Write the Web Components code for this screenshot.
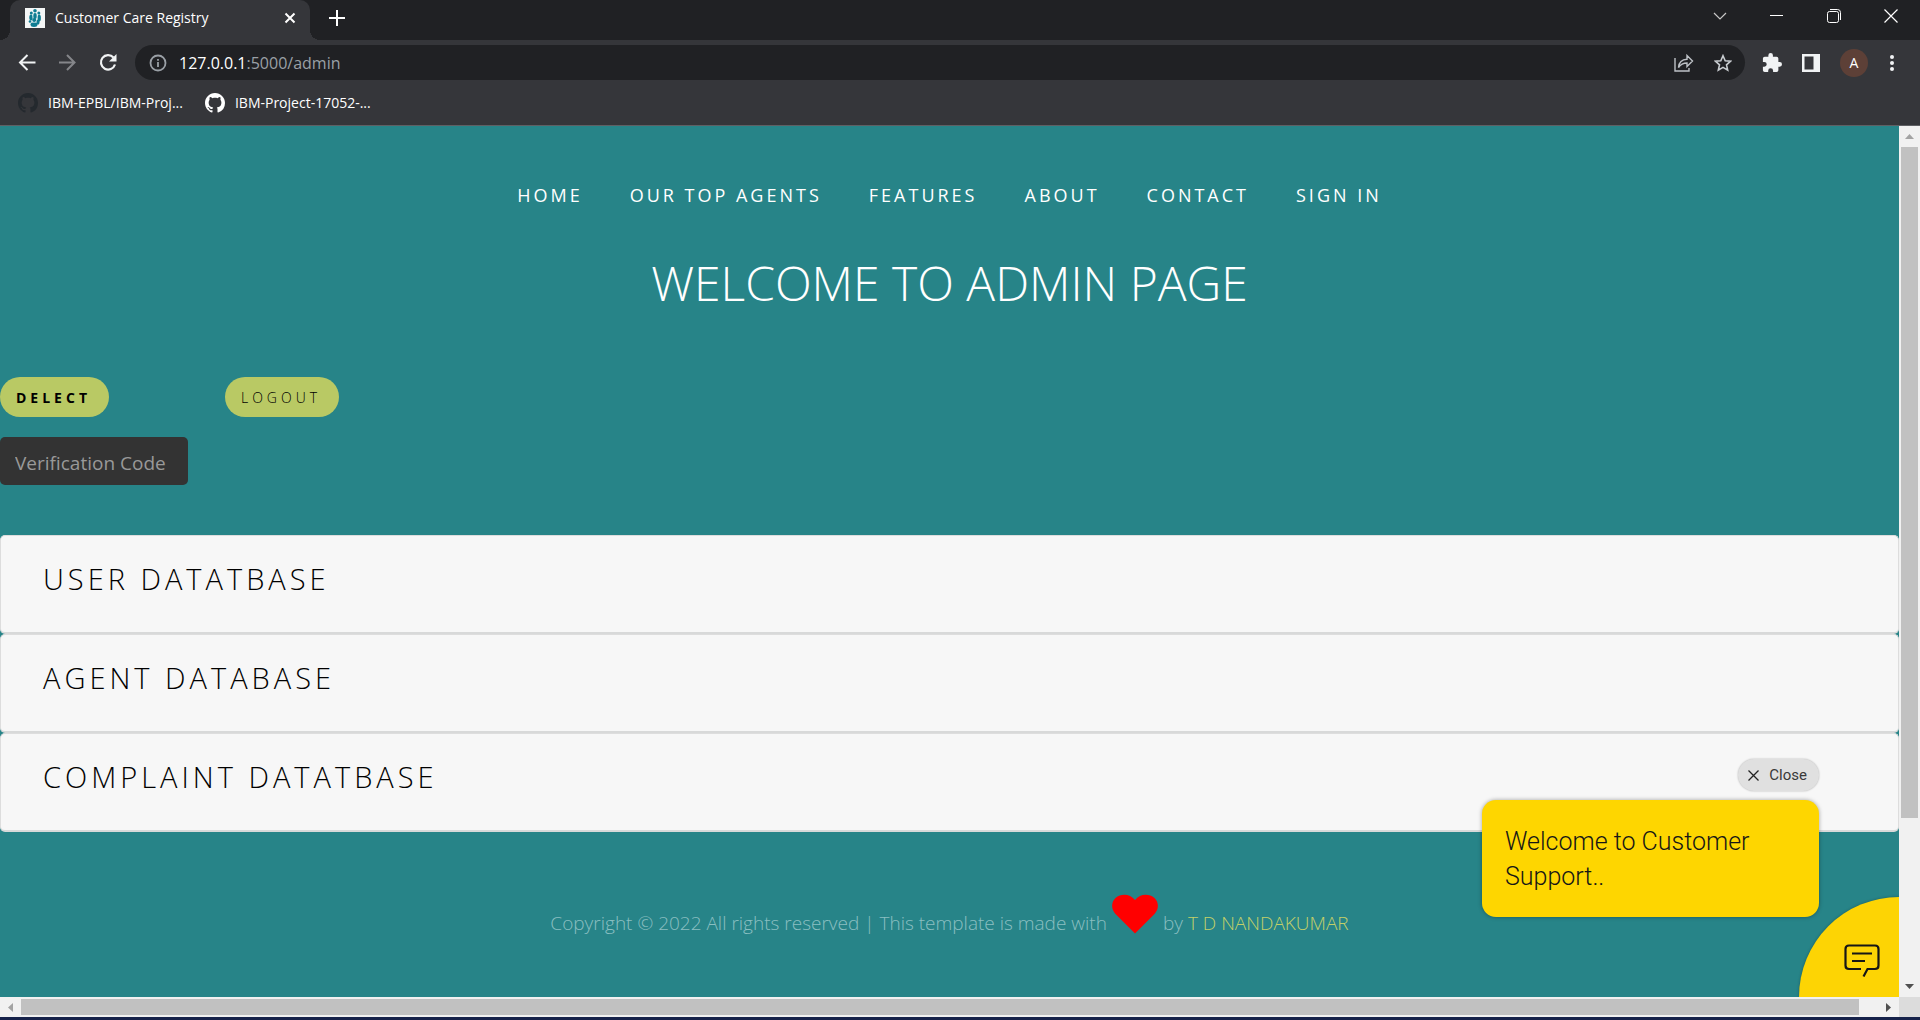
<!DOCTYPE html>
<html lang="en">
<head>
<meta charset="utf-8">
<title>Customer Care Registry</title>
<style>
html, body { margin: 0; height: 100%; overflow: hidden; }
body { font-family: "Open Sans", "Noto Sans", sans-serif; }
</style>
</head>
<body>
<browser-window>
  <tab-strip slot="chrome">Customer Care Registry</tab-strip>
  <tool-bar slot="chrome"></tool-bar>
  <bookmark-bar slot="chrome">
    <book-mark tone="dark">IBM-EPBL/IBM-Proj...</book-mark>
    <book-mark>IBM-Project-17052-...</book-mark>
  </bookmark-bar>
  <admin-page>
    <site-nav></site-nav>
    <admin-actions></admin-actions>
    <section-card>User Datatbase</section-card>
    <section-card>Agent Database</section-card>
    <section-card>Complaint Datatbase</section-card>
    <site-footer></site-footer>
    <chat-widget slot="overlay">Welcome to Customer Support..</chat-widget>
  </admin-page>
</browser-window>

<script>
function define(name, html) {
  const template = document.createElement('template');
  template.innerHTML = '<style>*{box-sizing:border-box}button{font:inherit;border:0;background:none;padding:0;color:inherit}svg{display:block}</style>' + html;
  customElements.define(name, class extends HTMLElement {
    constructor() {
      super();
      this.attachShadow({ mode: 'open' }).append(template.content.cloneNode(true));
    }
  });
}

define('browser-window', `
<style>
:host { display: flex; flex-direction: column; height: 100vh; background: #35363a; border-bottom: 3px solid #16224a; box-sizing: border-box; }
.view { flex: 1; min-height: 0; display: grid; grid-template-columns: 1fr 21px; grid-template-rows: 1fr 20px; border-top: 1px solid #5f6064; }
.corner { background: #dcdcdc; }
</style>
<slot name="chrome"></slot>
<div class="view">
  <slot></slot>
  <scroll-track></scroll-track>
  <scroll-track horizontal></scroll-track>
  <div class="corner"></div>
</div>`);

define('scroll-track', `
<style>
:host { display: flex; flex-direction: column; background: #f1f1f1; min-height: 0; }
.arrow { flex: none; width: 21px; height: 21px; display: grid; place-items: center; }
.rail { flex: 1; display: flex; padding: 0 2px; }
.thumb { background: #c1c1c1; width: 100%; height: 81%; }
:host([horizontal]) { flex-direction: row; }
:host([horizontal]) .arrow { height: 20px; }
:host([horizontal]) .rail { padding: 2px 0; }
:host([horizontal]) .thumb { height: 100%; width: 99%; }
:host([horizontal]) svg { transform: rotate(-90deg); }
</style>
<div class="arrow"><svg width="9" height="5"><path d="M0 5L4.500 0L9 5Z" fill="#a3a3a3"/></svg></div>
<div class="rail"><div class="thumb"></div></div>
<div class="arrow"><svg width="9" height="5"><path d="M0 0H9L4.500 5Z" fill="#505050"/></svg></div>`);

define('tab-strip', `
<style>
:host { display: flex; height: 40px; background: #202124; color: #fff; padding-left: 10px; align-items: stretch; font-size: 14px; }
.tab { position: relative; width: 300px; background: #35363a; border-radius: 10px 10px 0 0; display: flex; align-items: center; padding: 0 14px 4px 15px; gap: 10px; }
.tab::before, .tab::after { content: ""; position: absolute; bottom: 0; width: 10px; height: 10px; }
.tab::before { right: 100%; background: radial-gradient(circle at 0 0, #202124 10px, #35363a 10px); }
.tab::after { left: 100%; background: radial-gradient(circle at 100% 0, #202124 10px, #35363a 10px); }
.title { flex: 1; white-space: nowrap; padding-bottom: 2px; }
.new { margin-left: 19px; padding-bottom: 4px; }
.win { margin-left: auto; display: flex; padding: 0 1px 8px 0; }
.win button { width: 57px; display: grid; place-items: center; }
</style>
<div class="tab">
  <svg width="20" height="20" viewBox="0 0 20 20"><path fill="#f4f6f6" d="M0 0H20V20H0Z"/><g fill="#0e7c92"><circle cx="10" cy="2.800" r="1.800"/><circle cx="6.300" cy="5" r="1.500"/><circle cx="13.800" cy="5" r="1.500"/><ellipse cx="10" cy="8" rx="2" ry="3"/><ellipse cx="6" cy="9.500" rx="1.700" ry="3"/><ellipse cx="14.200" cy="10" rx="1.700" ry="3.500"/><circle cx="9.200" cy="12" r="2"/><ellipse cx="9" cy="16.500" rx="3.500" ry="2.500"/><ellipse cx="13" cy="14" rx="1.600" ry="2.800"/><circle cx="5" cy="13.500" r="1.300"/></g><path d="M8 6V10M12 6V12M6.800 14.200Q9 15 11.300 14.200" stroke="#d9eef0" stroke-width=".6" fill="none"/></svg>
  <span class="title"><slot></slot></span>
  <button aria-label="Close tab"><svg width="12" height="12"><path d="M1.500 1.500L10.500 10.500M10.500 1.500L1.500 10.500" stroke="#fff" stroke-width="2"/></svg></button>
</div>
<button class="new" aria-label="New tab"><svg width="16" height="16"><path d="M8 0V16M0 8H16" stroke="#fff" stroke-width="2"/></svg></button>
<div class="win">
  <button aria-label="Search tabs"><svg width="14" height="8"><path d="M1 1L7 7L13 1" fill="none" stroke="#c8c8c8" stroke-width="1.200"/></svg></button>
  <button aria-label="Minimize"><svg width="13" height="2"><path d="M0 .5H13" stroke="#fff"/></svg></button>
  <button aria-label="Restore"><svg width="14" height="14" fill="none" stroke="#fff"><rect x=".5" y="2.500" width="11" height="11" rx="2"/><path d="M3 .5H10.500Q13.500 .5 13.500 3.500V11"/></svg></button>
  <button aria-label="Close window"><svg width="14" height="14"><path d="M.5 .5L13.500 13.500M13.500 .5L.5 13.500" stroke="#fff" stroke-width="1.200"/></svg></button>
</div>`);

define('tool-bar', `
<style>
:host { display: flex; align-items: center; height: 45px; padding: 0 18px; gap: 20px; color: #fff; }
form { flex: 1; margin: 0 -3px; height: 35px; border-radius: 18px; background: #202124; display: flex; align-items: center; padding: 0 13px 0 14px; gap: 12px; }
.url { flex: 1; font-size: 16px; color: #9aa0a6; }
.url b { font-weight: 400; color: #fff; }
.share { margin-right: 8px; }
.avatar { width: 28px; height: 28px; border-radius: 50%; background: #5d4037; font-size: 14px; line-height: 28px; }
.more { width: 16px; display: grid; place-items: center; margin: 0 2px 0 -4px; }
</style>
<button aria-label="Back"><svg width="20" height="20" fill="none" stroke="#f1f3f4" stroke-width="2"><path d="M17.500 9.500H2.500M9.500 2L2 9.500L9.500 17"/></svg></button>
<button aria-label="Forward"><svg width="20" height="20" fill="none" stroke="#85868a" stroke-width="2"><path d="M1 9.500H16M9 2L16.500 9.500L9 17"/></svg></button>
<button aria-label="Reload"><svg width="20" height="20"><path d="M15.500 4.500A7.200 7.200 0 1 0 17 11.500" fill="none" stroke="#f1f3f4" stroke-width="2.200"/><path d="M18.500 1V8.500H11Z" fill="#f1f3f4"/></svg></button>
<form>
  <svg width="18" height="18" fill="none" stroke="#9aa0a6" stroke-width="1.800"><circle cx="9" cy="9" r="7.500"/><path d="M9 8V13M9 5V6.800"/></svg>
  <span class="url"><b>127.0.0.1</b>:5000/admin</span>
  <button class="share" type="button" aria-label="Share"><svg width="20" height="18" fill="none" stroke="#bdc1c6" stroke-width="1.400"><path d="M1 4V17H15V14"/><path d="M4.500 13.500C5 8 8.500 5.500 13 5.300V1.500L18.500 7L13 12.500V9C9 9 6.500 10.500 4.500 13.500Z"/></svg></button>
  <button type="button" aria-label="Bookmark"><svg width="18" height="18" viewBox="0 0 18 18"><path d="M9 1.700L11.200 6.700L16.600 7.200L12.500 10.800L13.700 16.200L9 13.400L4.300 16.200L5.500 10.800L1.400 7.200L6.800 6.700Z" fill="none" stroke="#c8ccd0" stroke-width="1.600"/></svg></button>
</form>
<button aria-label="Extensions"><svg width="20" height="20" viewBox="1 1 22 22"><path fill="#f1f3f4" d="M20.500 11H19V7a2 2 0 0 0-2-2h-4V3.500a2.500 2.500 0 0 0-5 0V5H4a2 2 0 0 0-2 2v3.800h1.500a2.700 2.700 0 0 1 0 5.400H2V20a2 2 0 0 0 2 2h3.800v-1.500a2.700 2.700 0 0 1 5.400 0V22H17a2 2 0 0 0 2-2v-4h1.500a2.500 2.500 0 0 0 0-5z"/></svg></button>
<button aria-label="Side panel"><svg width="18" height="18"><path fill="#f1f3f4" fill-rule="evenodd" d="M0 0H18V18H0ZM2.500 2.500V15.500H11.500V2.500Z"/></svg></button>
<button class="avatar" aria-label="Profile">A</button>
<button class="more" aria-label="Menu"><svg width="4" height="16" fill="#f1f3f4"><circle cx="2" cy="2" r="2"/><circle cx="2" cy="8" r="2"/><circle cx="2" cy="14" r="2"/></svg></button>`);

define('bookmark-bar', `
<style>:host { display: flex; gap: 22px; height: 40px; padding: 0 18px 4px; align-items: center; box-sizing: border-box; }</style>
<slot></slot>`);

define('book-mark', `
<style>
:host { --mark: #fff; display: block; }
:host([tone=dark]) { --mark: #24292e; }
a { display: flex; align-items: center; gap: 10px; color: #fff; text-decoration: none; font-size: 14px; white-space: nowrap; }
span { padding-bottom: 2px; }
</style>
<a href="#"><svg width="20" height="20" viewBox="0 0 16 16"><path fill="var(--mark)" d="M8 0C3.580 0 0 3.580 0 8c0 3.540 2.290 6.530 5.470 7.590.4.070.55-.17.55-.38 0-.19-.01-.82-.01-1.490-2.010.37-2.530-.49-2.690-.94-.09-.23-.48-.94-.82-1.130-.28-.15-.68-.52-.01-.53.63-.01 1.080.58 1.230.82.72 1.210 1.870.87 2.330.66.07-.52.28-.87.51-1.070-1.780-.2-3.640-.89-3.640-3.950 0-.87.31-1.590.82-2.150-.08-.2-.36-1.020.08-2.120 0 0 .67-.21 2.200.82.64-.18 1.320-.27 2-.27s1.360.09 2 .27c1.530-1.040 2.200-.82 2.200-.82.44 1.100.16 1.920.08 2.120.51.56.82 1.270.82 2.150 0 3.070-1.870 3.750-3.650 3.950.29.25.54.73.54 1.480 0 1.070-.01 1.930-.01 2.200 0 .21.15.46.55.38A8.010 8.010 0 0 0 16 8c0-4.420-3.580-8-8-8z"/></svg><span><slot></slot></span></a>`);

define('admin-page', `
<style>
:host { display: block; position: relative; min-width: 0; min-height: 0; overflow: hidden; background: #278488; }
</style>
<slot></slot><slot name="overlay"></slot>`);

define('site-nav', `
<style>
:host { display: block; text-align: center; color: #fff; text-transform: uppercase; padding-top: 56px; }
nav { display: flex; justify-content: center; gap: 47px; font-size: 18px; line-height: 26px; letter-spacing: 3px; }
a { color: inherit; text-decoration: none; }
h1 { margin: 43px 0 0; font-size: 48px; line-height: 64px; font-weight: 300; }
</style>
<nav><a href="#">Home</a><a href="#">Our top agents</a><a href="#">Features</a><a href="#">About</a><a href="#">Contact</a><a href="#">Sign in</a></nav>
<h1>Welcome to admin page</h1>`);

define('admin-actions', `
<style>
:host { display: block; padding: 62px 0 50px; }
.row { display: flex; gap: 116px; margin-bottom: 20px; }
button { height: 40px; padding: 0 18px 0 16px; border-radius: 20px; background: #b9c964; color: #000; font-size: 14px; font-weight: 300; letter-spacing: 4px; text-transform: uppercase; }
.strong { font-weight: 700; }
input { display: block; width: 188px; height: 48px; border: 0; border-radius: 5px; background: #333; color: #fff; font: inherit; font-size: 19px; padding: 4px 15px 0; }
input::placeholder { color: #999; opacity: 1; }
</style>
<div class="row"><button class="strong">Delect</button><button>Logout</button></div>
<input type="text" placeholder="Verification Code" aria-label="Verification Code">`);

define('section-card', `
<style>
:host { display: block; height: 99px; padding: 20px 42px; box-sizing: border-box; background: #f7f7f7; border: 1px solid #ddd; border-bottom: 2px solid #d8d9d9; border-radius: 5px; }
h2 { margin: 0; font-size: 29px; line-height: 46px; font-weight: 300; letter-spacing: 4px; text-transform: uppercase; color: #000; }
</style>
<h2><slot></slot></h2>`);

define('site-footer', `
<style>
:host { display: block; padding-top: 60px; }
p { margin: 0; display: flex; justify-content: center; align-items: flex-start; gap: 5px; font-size: 19px; line-height: 28px; font-weight: 300; color: #8abfc1; }
span, a { margin-top: 17px; }
a { color: #c3d068; text-decoration: none; }
svg { margin-top: 2px; }
</style>
<p><span>Copyright © 2022 All rights reserved | This template is made with</span><svg width="46" height="40" viewBox="0 0 46 40"><path fill="#f00" d="M23 39.500L3.500 20C-1 15.500-1 8 3.500 4C9-.8 18-.5 23 6C28-.5 37-.8 42.500 4C47 8 47 15.500 42.500 20Z"/></svg><span>by</span><a href="#">T D NANDAKUMAR</a></p>`);

define('chat-widget', `
<style>
:host { position: absolute; right: 0; bottom: 0; font-family: Roboto, "Open Sans", sans-serif; color: #161616; }
.pop { display: flex; flex-direction: column; align-items: flex-end; gap: 9px; margin: 0 80px 80px 0; }
.close { display: flex; align-items: center; gap: 10px; height: 32px; padding: 0 12px 0 10px; border-radius: 16px; background: #e0e0e0; color: #393939; font-size: 15px; box-shadow: 0 0 2px rgba(0,0,0,.3); }
.msg { width: 337px; padding: 24px 23px 23px; border-radius: 14px; background: #fed600; font-size: 25px; line-height: 35px; font-weight: 300; box-shadow: 0 0 4px rgba(0,0,0,.35); }
.launch { position: absolute; right: 0; bottom: 0; width: 100px; height: 100px; border-radius: 100px 0 0 0; background: #fdd404; box-shadow: 0 0 3px rgba(0,0,0,.3); padding: 28px 0 0 25px; display: grid; place-items: center; }
</style>
<div class="pop">
  <button class="close"><svg width="11" height="11"><path d="M.5 .5L10.500 10.500M10.500 .5L.5 10.500" stroke="#222" stroke-width="1.300"/></svg>Close</button>
  <div class="msg"><slot></slot></div>
</div>
<button class="launch" aria-label="Open chat"><svg width="36" height="34" viewBox="0 0 36 34" fill="none" stroke="#161616" stroke-width="2.200"><path d="M17 25H5Q1.500 25 1.500 21.500V5Q1.500 1.500 5 1.500H31Q34.500 1.500 34.500 5V21.500Q34.500 25 31 25H23.500L19.500 32.500M8 9.500H28M8 17H21"/></svg></button>`);
</script>
</body>
</html>
